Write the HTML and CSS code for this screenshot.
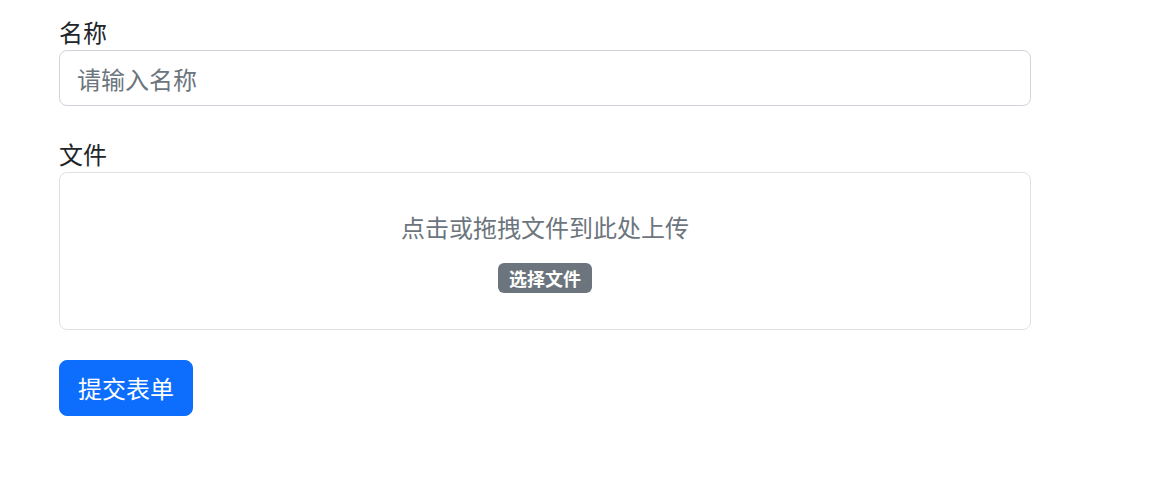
FILE: index.html
```html
<!DOCTYPE html>
<html lang="zh-CN">
<head>
<meta charset="utf-8">
<title>表单</title>
<link rel="stylesheet" href="styles.css">
</head>
<body>
<form class="form">
  <div class="field">
    <label class="label" for="name">名称</label>
    <input class="input" id="name" type="text" placeholder="请输入名称">
  </div>
  <div class="field">
    <label class="label">文件</label>
    <div class="dropzone">
      <div class="drop-text">点击或拖拽文件到此处上传</div>
      <span class="badge">选择文件</span>
    </div>
  </div>
  <button class="btn" type="button">提交表单</button>
</form>
</body>
</html>
```
FILE: styles.css
```css
* { box-sizing: border-box; }
html, body { margin: 0; background: #fff; }
body {
  font-family: "Noto Sans CJK SC", "Noto Sans", sans-serif;
  font-size: 24px;
  color: #212529;
}
.form {
  width: 1031px;
  padding: 17px 0 0 59px;
  display: flex;
  flex-direction: column;
  align-items: flex-start;
}
.field {
  width: 972px;
  margin-bottom: 33px;
}
.field:nth-child(2) { margin-bottom: 30px; }
.label {
  display: block;
  font-size: 24px;
  line-height: 30px;
  margin-bottom: 3px;
  color: #212529;
}
.input {
  display: block;
  width: 100%;
  height: 56px;
  padding: 0 17px;
  border: 1px solid #ced4da;
  border-radius: 8px;
  font: inherit;
  font-size: 24px;
  color: #212529;
  outline: none;
}
.input::placeholder { color: #6c757d; opacity: 1; }
.dropzone {
  border: 1px solid #dee2e6;
  border-radius: 8px;
  padding: 36px 0 36px;
  display: flex;
  flex-direction: column;
  align-items: center;
}
.drop-text {
  font-size: 24px;
  line-height: 36px;
  color: #6c757d;
  margin-bottom: 18px;
}
.badge {
  display: inline-block;
  background: #6c757d;
  color: #fff;
  font-size: 18px;
  font-weight: 700;
  line-height: 30px;
  height: 30px;
  padding: 0 11px;
  border-radius: 6px;
}
.btn {
  font: inherit;
  font-size: 24px;
  line-height: 36px;
  color: #fff;
  background: #0d6efd;
  border: 1px solid #0d6efd;
  border-radius: 8px;
  padding: 9px 18px;
  cursor: pointer;
}
```
